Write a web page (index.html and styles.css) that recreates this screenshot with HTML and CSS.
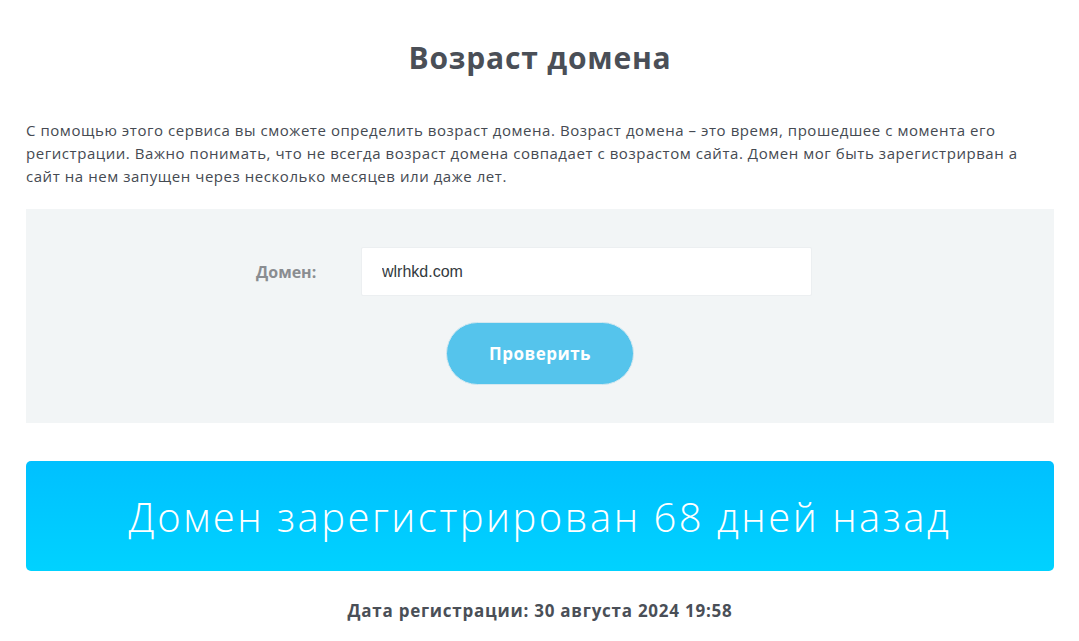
FILE: index.html
```html
<!DOCTYPE html>
<html lang="ru">
<head>
<meta charset="utf-8">
<title>Возраст домена</title>
<link rel="stylesheet" href="styles.css">
</head>
<body>
<main class="page">
  <h1 class="title">Возраст домена</h1>
  <p class="intro">С помощью этого сервиса вы сможете определить возраст домена. Возраст домена – это время, прошедшее с момента его регистрации. Важно понимать, что не всегда возраст домена совпадает с возрастом сайта. Домен мог быть зарегистрирван а сайт на нем запущен через несколько месяцев или даже лет.</p>
  <form class="check-box">
    <div class="field-row">
      <label class="field-label" for="domain">Домен:</label>
      <input class="field-input" id="domain" type="text" value="wlrhkd.com">
    </div>
    <button class="check-btn" type="button">Проверить</button>
  </form>
  <div class="result">Домен зарегистрирован 68 дней назад</div>
  <p class="reg-date">Дата регистрации: 30 августа 2024 19:58</p>
</main>
</body>
</html>
```

FILE: styles.css
```css
html, body {
  margin: 0;
  padding: 0;
  background: #ffffff;
}
body {
  font-family: "Open Sans", "Lato", sans-serif;
  color: #4a4f57;
}
.page {
  margin: 0 25px 0 26px;
  padding-top: 38px;
}
.title {
  margin: 0;
  text-align: center;
  font-family: "Open Sans", sans-serif;
  font-weight: 700;
  font-size: 30px;
  line-height: 40px;
  letter-spacing: 0.8px;
  color: #4a4f57;
}
.intro {
  margin: 41px 0 0 0;
  font-size: 15px;
  line-height: 23px;
  font-weight: 500;
  letter-spacing: 0.55px;
  color: #454a52;
}
.check-box {
  margin-top: 21px;
  background: #f2f5f6;
  height: 214px;
  box-sizing: border-box;
  padding-top: 38px;
  display: flex;
  flex-direction: column;
  align-items: center;
}
.field-row {
  display: flex;
  align-items: center;
  margin-right: 12px;
}
.field-label {
  width: 105px;
  font-size: 16px;
  font-weight: 700;
  color: #8a8d91;
}
.field-input {
  width: 451px;
  height: 49px;
  box-sizing: border-box;
  border: 1px solid #eceff1;
  border-radius: 2px;
  background: #fff;
  padding: 0 20px;
  font-family: "Liberation Sans", Arial, sans-serif;
  font-size: 16px;
  color: #333a40;
  outline: none;
}
.check-btn {
  margin-top: 26px;
  width: 188px;
  height: 63px;
  border: 1px solid #d4e8f0;
  border-radius: 32px;
  background: #55c4ec;
  color: #fff;
  font-family: "Open Sans", sans-serif;
  font-weight: 700;
  font-size: 17px;
  letter-spacing: 0.5px;
  cursor: pointer;
}
.result {
  margin-top: 38px;
  height: 110px;
  border-radius: 5px;
  background: linear-gradient(to bottom, #00c0ff, #00d2ff);
  color: #fff;
  display: flex;
  align-items: center;
  justify-content: center;
  font-family: "Open Sans", sans-serif;
  font-weight: 300;
  font-size: 40px;
  letter-spacing: 2.5px;
}
.reg-date {
  margin: 28px 0 0 0;
  text-align: center;
  font-family: "Open Sans", sans-serif;
  font-weight: 700;
  font-size: 17px;
  letter-spacing: 0.75px;
  color: #4a4f57;
}
```
